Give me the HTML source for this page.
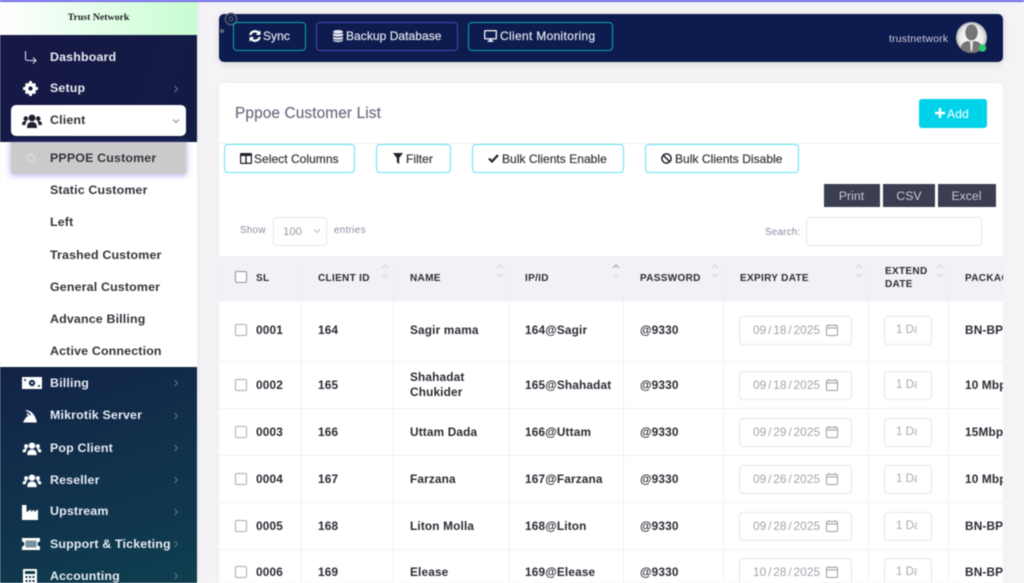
<!DOCTYPE html>
<html><head><meta charset="utf-8"><style>
html,body{margin:0;padding:0;width:1024px;height:583px;overflow:hidden;background:#f4f4f6}
#p{position:absolute;left:0;top:0;width:1024px;height:583px;overflow:hidden;font-family:"Liberation Sans",sans-serif;filter:blur(.45px)}
#p div,#p span,#p svg{position:absolute;white-space:nowrap}
.bar{left:0;top:0;width:1024px;height:2px;background:#6f66ea;z-index:9}
.m{left:50px;height:20px;line-height:20px;font-size:12.4px;font-weight:bold;letter-spacing:.17px;color:#e9ebf2}
.s{color:#33343c}
.ar{left:172px;width:8px;height:8px}
.ic{left:22px;width:18px;height:18px;fill:#fff}
.tb{top:22px;height:27px;border:1px solid #12a5b5;border-radius:4px;box-sizing:content-box}
.tt{top:23px;line-height:27px;font-size:12px;color:#e2e6f0;-webkit-text-stroke:.2px #e2e6f0}
.btn{top:144px;height:27px;border:1px solid #62e2f2;border-radius:4px;background:#fff}
.bt{top:145.500px;line-height:27px;font-size:12px;letter-spacing:.04px;color:#33343c;-webkit-text-stroke:.2px #33343c}
.dk{top:184px;height:23px;line-height:24px;background:#3a3e50;color:#c9cbd3;font-size:12.200px;text-align:center;letter-spacing:.05px}
.th{top:268.500px;height:20px;line-height:20px;font-size:10px;font-weight:bold;letter-spacing:.32px;color:#2b2c36}
.vl{top:257px;width:1px;height:326px;background:#efeff5}
.hl{left:219px;width:784px;height:1px;background:#efeff5}
.r{left:0;width:1024px;height:20px;line-height:20px;font-size:11.800px;font-weight:bold;letter-spacing:.17px;color:#2a2a33}
.r span{top:0}
.cb{left:235px;top:4px;width:9.500px;height:9.500px;border:1px solid #a9a9b6;border-radius:2px;background:#fff}
.d{left:739px;top:-4px;width:111px;height:27px;border:1px solid #e6e6ee;border-radius:4px;background:#fff}
.e{left:884px;top:-4px;width:46px;height:27px;border:1px solid #e6e6ee;border-radius:4px;background:#fff}
.r .dt{left:753px;font-weight:normal;color:#a3a3ad;letter-spacing:.1px;word-spacing:-1.600px;font-size:11.800px}
.r .et{left:896px;font-weight:normal;color:#a9a9b2;font-size:11.500px;letter-spacing:0;width:21px;overflow:hidden}
.cal{left:826px;top:4px;width:12px;height:12px}
.srt{width:8px;height:16px;top:264px}
.sm{line-height:16px;font-size:9.800px;color:#8b8ba0;letter-spacing:.35px}
</style></head><body><div id="p">
<div class="bar"></div>

<!-- sidebar -->
<div style="left:0;top:0;width:197px;height:583px;background:#fff;box-shadow:1px 0 6px rgba(0,0,0,.05)"></div>
<div style="left:0;top:2px;width:197px;height:33px;background:linear-gradient(90deg,#fff,#c8fdd2)"></div>
<div style="left:0;top:10.500px;width:197px;text-align:center;font-family:'Liberation Serif',serif;font-size:9.800px;font-weight:bold;color:#222;line-height:14px">Trust Network</div>
<div style="left:0;top:35px;width:197px;height:107px;background:linear-gradient(110deg,#171845,#131c45)"></div>
<div style="left:0;top:367px;width:197px;height:216px;background:linear-gradient(160deg,#122347,#0f3f50)"></div>

<svg style="left:24px;top:50px;width:14px;height:14px" viewBox="0 0 14 14" fill="none" stroke="#d8dbe6" stroke-width="1.100"><path d="M1.500 1v7.500a2 2 0 0 0 2 2H12M9 7.500l3 3-3 3"/></svg>
<div class="m" style="top:47px">Dashboard</div>

<svg class="ic" style="top:81px;left:23px;width:15px;height:15px" viewBox="0 0 16 16"><circle cx="8" cy="8" r="4.200" fill="none" stroke="#fff" stroke-width="3.800"/><path d="M6.600 0h2.800l.3 2.600H6.300zM6.600 16h2.800l.3-2.600H6.300zM0 6.600v2.800l2.600.3V6.300zM16 6.600v2.800l-2.600.3V6.300zM1.900 3.800l2-2 1.600 2-1.600 1.600zM14.100 3.800l-2-2-1.600 2 1.600 1.600zM1.900 12.200l2 2 1.600-2-1.600-1.600zM14.100 12.200l-2 2-1.600-2 1.600-1.600z"/></svg>
<div class="m" style="top:78px">Setup</div>
<svg class="ar" style="top:85px" viewBox="0 0 8 8" fill="none" stroke="#6d7288" stroke-width="1"><path d="M2.500 1l3 3-3 3"/></svg>

<div style="left:11px;top:105px;width:175px;height:31px;background:#fff;border-radius:5px"></div>
<svg style="left:22px;top:113px;width:20px;height:16px" viewBox="0 0 20 16" fill="#20202c"><circle cx="10" cy="5" r="3.400"/><circle cx="3.800" cy="5.600" r="2.300"/><circle cx="16.200" cy="5.600" r="2.300"/><path d="M5 15c0-4.500 1.800-6 5-6s5 1.500 5 6zM0 12c0-3 1-4 3.500-4 .5 0 1 .1 1.300.3C3.800 9.300 3.500 10.500 3.500 12zM20 12c0-3-1-4-3.500-4-.5 0-1 .1-1.300.3 1 1 1.300 2.200 1.300 3.700z"/></svg>
<div class="m s" style="top:110px;color:#2f3038">Client</div>
<svg class="ar" style="top:117px" viewBox="0 0 8 8" fill="none" stroke="#8b8c98" stroke-width="1"><path d="M1 2.500l3 3 3-3"/></svg>

<div style="left:11px;top:142px;width:175px;height:32px;background:#cbcbcb;border-radius:0 0 3px 3px;box-shadow:0 1px 6px 1px rgba(110,100,240,.45)"></div>
<div style="left:27px;top:154px;width:6px;height:6px;border:1px solid #e2e2e2;border-radius:50%"></div>
<div class="m s" style="top:148px">PPPOE Customer</div>
<div class="m s" style="top:180px">Static Customer</div>
<div class="m s" style="top:212px">Left</div>
<div class="m s" style="top:245px">Trashed Customer</div>
<div class="m s" style="top:277px">General Customer</div>
<div class="m s" style="top:309px">Advance Billing</div>
<div class="m s" style="top:341px">Active Connection</div>

<svg style="left:22px;top:377px;width:20px;height:13px" viewBox="0 0 20 13"><rect width="20" height="12" fill="#fff"/><circle cx="10" cy="6" r="3.200" fill="#16304c"/><circle cx="10" cy="6" r="1" fill="#fff"/><circle cx="3" cy="3" r="1" fill="#16304c"/><circle cx="17" cy="9" r="1" fill="#16304c"/></svg>
<div class="m" style="top:373px">Billing</div>
<svg style="left:23px;top:409px;width:15px;height:14px" viewBox="0 0 15 14" fill="#fff"><path d="M3 1c5 .5 9 4 11 12.500H0L2.500 9 5 7 3.500 4.500l1-.5L7 6.500 8 6C7 4 5 2.500 3 2z"/></svg>
<div class="m" style="top:405px">Mikrotik Server</div>
<svg style="left:22px;top:441px;width:20px;height:15px" viewBox="0 0 20 16" fill="#fff"><circle cx="10" cy="5" r="3.400"/><circle cx="3.800" cy="5.600" r="2.300"/><circle cx="16.200" cy="5.600" r="2.300"/><path d="M5 15c0-4.500 1.800-6 5-6s5 1.500 5 6zM0 12c0-3 1-4 3.500-4 .5 0 1 .1 1.300.3C3.800 9.300 3.500 10.500 3.500 12zM20 12c0-3-1-4-3.500-4-.5 0-1 .1-1.300.3 1 1 1.300 2.200 1.300 3.700z"/></svg>
<div class="m" style="top:438px">Pop Client</div>
<svg style="left:22px;top:473px;width:20px;height:15px" viewBox="0 0 20 16" fill="#fff"><circle cx="10" cy="5" r="3.400"/><circle cx="3.800" cy="5.600" r="2.300"/><circle cx="16.200" cy="5.600" r="2.300"/><path d="M5 15c0-4.500 1.800-6 5-6s5 1.500 5 6zM0 12c0-3 1-4 3.500-4 .5 0 1 .1 1.300.3C3.800 9.300 3.500 10.500 3.500 12zM20 12c0-3-1-4-3.500-4-.5 0-1 .1-1.300.3 1 1 1.300 2.200 1.300 3.700z"/></svg>
<div class="m" style="top:470px">Reseller</div>
<svg style="left:22px;top:505px;width:16px;height:15px" viewBox="0 0 16 15" fill="#fff"><path d="M0 0h4.500v7L9 4.500V7l3-2.500V7l4-2.500V15H0z"/></svg>
<div class="m" style="top:501px">Upstream</div>
<svg style="left:22px;top:538px;width:18px;height:12px" viewBox="0 0 18 12"><path fill="#fff" fill-rule="evenodd" d="M0 0h18v3.500a2.500 2.500 0 0 0 0 5V12H0V8.500a2.500 2.500 0 0 0 0-5zM3.500 2.500v7h11v-7z"/><rect x="3.500" y="2.500" width="11" height="7" fill="#fff" fill-opacity=".45"/></svg>
<div class="m" style="top:534px">Support &amp; Ticketing</div>
<svg style="left:23px;top:569px;width:14px;height:16px" viewBox="0 0 14 16"><path fill="#fff" fill-rule="evenodd" d="M1 0h12a1 1 0 0 1 1 1v15H0V1a1 1 0 0 1 1-1zM2 2v3h10V2zM2.500 7v2h2V7zM6 7v2h2V7zM9.500 7v2h2V7zM2.500 11v2h2v-2zM6 11v2h2v-2zM9.500 11v2h2v-2z"/></svg>
<div class="m" style="top:566px">Accounting</div>

<svg class="ar" style="top:379px" viewBox="0 0 8 8" fill="none" stroke="#5e7486" stroke-width="1"><path d="M2.500 1l3 3-3 3"/></svg>
<svg class="ar" style="top:412px" viewBox="0 0 8 8" fill="none" stroke="#5e7486" stroke-width="1"><path d="M2.500 1l3 3-3 3"/></svg>
<svg class="ar" style="top:444px" viewBox="0 0 8 8" fill="none" stroke="#5e7486" stroke-width="1"><path d="M2.500 1l3 3-3 3"/></svg>
<svg class="ar" style="top:476px" viewBox="0 0 8 8" fill="none" stroke="#5e7486" stroke-width="1"><path d="M2.500 1l3 3-3 3"/></svg>
<svg class="ar" style="top:508px" viewBox="0 0 8 8" fill="none" stroke="#5e7486" stroke-width="1"><path d="M2.500 1l3 3-3 3"/></svg>
<svg class="ar" style="top:540px;left:172px" viewBox="0 0 8 8" fill="none" stroke="#5e7486" stroke-width="1"><path d="M2.500 1l3 3-3 3"/></svg>
<svg class="ar" style="top:572px" viewBox="0 0 8 8" fill="none" stroke="#5e7486" stroke-width="1"><path d="M2.500 1l3 3-3 3"/></svg>

<!-- navbar -->
<div style="left:218.500px;top:13.500px;width:784px;height:48px;background:#0e1b4e;border-radius:5px;box-shadow:0 2px 8px rgba(0,0,0,.12)"></div>
<svg style="left:224px;top:12px;width:14px;height:14px" viewBox="0 0 14 14" fill="none" stroke="#5d6478"><circle cx="7" cy="7" r="5.700" stroke-width="1.300"/><circle cx="7" cy="7" r="2" stroke-width="1"/></svg>
<div style="left:220px;top:29px;width:3.500px;height:3.500px;background:#5d6478;border-radius:50%"></div>
<div class="tb" style="left:233px;width:71px"></div>
<div class="tb" style="left:316px;width:140px;border-color:#4b45b5"></div>
<div class="tb" style="left:468px;width:143px"></div>
<svg style="left:249px;top:30px;width:12px;height:12px" viewBox="0 0 12 12" fill="none" stroke="#fff" stroke-width="2.300"><path d="M1.300 5A4.800 4.800 0 0 1 10 3.500M10.700 7A4.800 4.800 0 0 1 2 8.500"/><path d="M11.500 .2v4.800H6.800zM.5 11.800V7h4.700z" fill="#fff" stroke="none"/></svg>
<div class="tt" style="left:263px;letter-spacing:.05px">Sync</div>
<svg style="left:333px;top:30px;width:10px;height:12px" viewBox="0 0 10 12" fill="#e6e8f0"><ellipse cx="5" cy="1.800" rx="5" ry="1.800"/><path d="M0 3.200c1 1 9 1 10 0V5.600c-1 1.300-9 1.300-10 0zM0 6.800c1 1 9 1 10 0v2c-1 1.300-9 1.300-10 0zM0 9.800c1 1 9 1 10 0v.7C9.500 12.500.5 12.500 0 10.500z"/></svg>
<div class="tt" style="left:346px;letter-spacing:.05px">Backup Database</div>
<svg style="left:484px;top:30px;width:13px;height:12px" viewBox="0 0 13 12"><path fill="#e6e8f0" fill-rule="evenodd" d="M1 0h11a1 1 0 0 1 1 1v7.500a1 1 0 0 1-1 1H8v1.200h1.500V12h-6v-1.300H5V9.500H1a1 1 0 0 1-1-1V1a1 1 0 0 1 1-1zm.4 1.400v6.700h10.200V1.400z"/></svg>
<div class="tt" style="left:500px;letter-spacing:.32px">Client Monitoring</div>
<div style="left:889px;top:32px;line-height:15px;font-size:10.400px;color:#cdd0dc;letter-spacing:.22px">trustnetwork</div>
<svg style="left:956px;top:22px;width:32px;height:32px" viewBox="0 0 32 32">
<defs><radialGradient id="a"><stop offset="0" stop-color="#fff"/><stop offset=".75" stop-color="#ececec"/><stop offset="1" stop-color="#b5b5b5"/></radialGradient><clipPath id="c"><circle cx="15.500" cy="15.500" r="15.500"/></clipPath></defs>
<circle cx="15.500" cy="15.500" r="15.500" fill="url(#a)"/>
<g clip-path="url(#c)"><ellipse cx="15.500" cy="10.500" rx="6.200" ry="8" fill="#757575"/><path d="M4 31c0-8 3-11 8-12l3.500 1 3.500-1c5 1 8 4 8 12z" fill="#757575"/><path d="M14 20h3l-.7 9h-1.600z" fill="#e8e8e8"/></g>
<circle cx="26.500" cy="26" r="3.800" fill="#2dcb6b"/></svg>

<!-- card -->
<div style="left:219px;top:83px;width:784px;height:500px;background:#fff;border-radius:5px 5px 0 0;box-shadow:0 0 8px rgba(0,0,0,.04)"></div>
<div style="left:235px;top:103.500px;line-height:20px;font-size:15.400px;color:#6b6b80;letter-spacing:.12px;-webkit-text-stroke:.15px #6b6b80">Pppoe Customer List</div>
<div style="left:918.500px;top:98.500px;width:68px;height:29px;background:#00d2ea;border-radius:3px"></div>
<svg style="left:935px;top:108px;width:10px;height:10px" viewBox="0 0 10 10" fill="#fff"><path d="M3.800 0h2.400v3.800H10v2.400H6.200V10H3.800V6.200H0V3.800h3.800z"/></svg>
<div style="left:947px;top:103.500px;line-height:20px;font-size:12px;color:#e4fbff;letter-spacing:.25px;-webkit-text-stroke:.2px #e4fbff">Add</div>
<div style="left:219px;top:143px;width:784px;height:1px;background:#f0f0f4"></div>

<div class="btn" style="left:224px;width:129px"></div>
<svg style="left:240px;top:153px;width:12px;height:11px" viewBox="0 0 12 11"><path fill="#22232c" fill-rule="evenodd" d="M1 0h10a1 1 0 0 1 1 1v9a1 1 0 0 1-1 1H1a1 1 0 0 1-1-1V1a1 1 0 0 1 1-1zm.3 3v6.700h4V3zm5.400 0v6.700h4V3z"/></svg>
<div class="bt" style="left:254px">Select Columns</div>
<div class="btn" style="left:376px;width:73px"></div>
<svg style="left:393px;top:153px;width:10px;height:11px" viewBox="0 0 10 11" fill="#22232c"><path d="M0 0h10L6.200 5v6L3.800 9.300V5z"/></svg>
<div class="bt" style="left:406px">Filter</div>
<div class="btn" style="left:472px;width:150px"></div>
<svg style="left:488px;top:154px;width:11px;height:9px" viewBox="0 0 11 9" fill="none" stroke="#22232c" stroke-width="2.200"><path d="M1 4.500l3 3 6-6.500"/></svg>
<div class="bt" style="left:502px">Bulk Clients Enable</div>
<div class="btn" style="left:645px;width:152px"></div>
<svg style="left:661px;top:153px;width:11px;height:11px" viewBox="0 0 11 11" fill="none" stroke="#22232c" stroke-width="1.500"><circle cx="5.500" cy="5.500" r="4.600"/><path d="M2.300 2.300l6.400 6.400"/></svg>
<div class="bt" style="left:675px">Bulk Clients Disable</div>

<div class="dk" style="left:823.500px;width:56px">Print</div>
<div class="dk" style="left:883px;width:52px">CSV</div>
<div class="dk" style="left:937.500px;width:58px">Excel</div>

<div class="sm" style="left:240px;top:223px">Show</div>
<div style="left:273px;top:217px;width:52px;height:27px;border:1px solid #e6e6ee;border-radius:4px"></div>
<div style="left:283px;top:224px;line-height:16px;font-size:11.400px;color:#9a9aa5">100</div>
<svg style="left:313px;top:228px;width:8px;height:6px" viewBox="0 0 8 6" fill="none" stroke="#b5b5c0" stroke-width=".9"><path d="M1 1.500l3 3 3-3"/></svg>
<div class="sm" style="left:334px;top:223px">entries</div>
<div class="sm" style="left:765px;top:225px;letter-spacing:.25px">Search:</div>
<div style="left:806px;top:217px;width:174px;height:27px;border:1px solid #e6e6ee;border-radius:4px"></div>

<!-- table -->
<div style="left:219px;top:256px;width:784px;height:43px;background:#f1f1f6"></div>
<div class="vl" style="left:301px"></div><div class="vl" style="left:393px"></div><div class="vl" style="left:509px"></div><div class="vl" style="left:623px"></div><div class="vl" style="left:723px"></div><div class="vl" style="left:868px"></div><div class="vl" style="left:948px"></div>
<div class="hl" style="top:299px;height:2px"></div><div class="hl" style="top:361px"></div><div class="hl" style="top:408px"></div><div class="hl" style="top:455px"></div><div class="hl" style="top:502px"></div><div class="hl" style="top:549px"></div>

<div style="left:235px;top:271px;width:9.500px;height:9.500px;border:1px solid #8f8f9e;border-radius:2px;background:#fff"></div>
<div class="th" style="left:256px">SL</div>
<div class="th" style="left:318px">CLIENT ID</div>
<div class="th" style="left:410px">NAME</div>
<div class="th" style="left:525px">IP/ID</div>
<div class="th" style="left:640px">PASSWORD</div>
<div class="th" style="left:740px">EXPIRY DATE</div>
<div class="th" style="left:885px;top:264.500px;line-height:13px;height:26px">EXTEND<br>DATE</div>
<div class="th" style="left:965px">PACKAGE</div>

<svg class="srt" style="left:381px" viewBox="0 0 8 16" fill="none" stroke="#d4d4de"><path d="M1 4l3-3 3 3M1 10l3 3 3-3"/></svg>
<svg class="srt" style="left:496px" viewBox="0 0 8 16" fill="none" stroke="#d4d4de"><path d="M1 4l3-3 3 3M1 10l3 3 3-3"/></svg>
<svg class="srt" style="left:612px" viewBox="0 0 8 16" fill="none"><path d="M1 4l3-3 3 3" stroke="#9a9aa8"/><path d="M1 10l3 3 3-3" stroke="#d4d4de"/></svg>
<svg class="srt" style="left:711px" viewBox="0 0 8 16" fill="none" stroke="#d4d4de"><path d="M1 4l3-3 3 3M1 10l3 3 3-3"/></svg>
<svg class="srt" style="left:855px" viewBox="0 0 8 16" fill="none" stroke="#d4d4de"><path d="M1 4l3-3 3 3M1 10l3 3 3-3"/></svg>
<svg class="srt" style="left:936px" viewBox="0 0 8 16" fill="none" stroke="#d4d4de"><path d="M1 4l3-3 3 3M1 10l3 3 3-3"/></svg>

<div class="r" style="top:320px"><div class="cb"></div><span style="left:256px">0001</span><span style="left:318px">164</span><span style="left:410px">Sagir mama</span><span style="left:525px">164@Sagir</span><span style="left:640px">@9330</span><div class="d"></div><span class="dt">09 / 18 / 2025</span><svg class="cal" viewBox="0 0 12 12" fill="none" stroke="#9b9ba5"><rect x=".5" y="1.500" width="11" height="10" rx="1"/><path d="M.5 4h11M3 0v2M9 0v2"/></svg><div class="e"></div><span class="et">1 Day</span><span style="left:965px">BN-BP</span></div>
<div class="r" style="top:375px"><div class="cb"></div><span style="left:256px">0002</span><span style="left:318px">165</span><span style="left:410px;line-height:15px;height:30px;top:-5px">Shahadat<br>Chukider</span><span style="left:525px">165@Shahadat</span><span style="left:640px">@9330</span><div class="d"></div><span class="dt">09 / 18 / 2025</span><svg class="cal" viewBox="0 0 12 12" fill="none" stroke="#9b9ba5"><rect x=".5" y="1.500" width="11" height="10" rx="1"/><path d="M.5 4h11M3 0v2M9 0v2"/></svg><div class="e"></div><span class="et">1 Day</span><span style="left:965px">10 Mbps</span></div>
<div class="r" style="top:422px"><div class="cb"></div><span style="left:256px">0003</span><span style="left:318px">166</span><span style="left:410px">Uttam Dada</span><span style="left:525px">166@Uttam</span><span style="left:640px">@9330</span><div class="d"></div><span class="dt">09 / 29 / 2025</span><svg class="cal" viewBox="0 0 12 12" fill="none" stroke="#9b9ba5"><rect x=".5" y="1.500" width="11" height="10" rx="1"/><path d="M.5 4h11M3 0v2M9 0v2"/></svg><div class="e"></div><span class="et">1 Day</span><span style="left:965px">15Mbps</span></div>
<div class="r" style="top:469px"><div class="cb"></div><span style="left:256px">0004</span><span style="left:318px">167</span><span style="left:410px">Farzana</span><span style="left:525px">167@Farzana</span><span style="left:640px">@9330</span><div class="d"></div><span class="dt">09 / 26 / 2025</span><svg class="cal" viewBox="0 0 12 12" fill="none" stroke="#9b9ba5"><rect x=".5" y="1.500" width="11" height="10" rx="1"/><path d="M.5 4h11M3 0v2M9 0v2"/></svg><div class="e"></div><span class="et">1 Day</span><span style="left:965px">10 Mbps</span></div>
<div class="r" style="top:516px"><div class="cb"></div><span style="left:256px">0005</span><span style="left:318px">168</span><span style="left:410px">Liton Molla</span><span style="left:525px">168@Liton</span><span style="left:640px">@9330</span><div class="d"></div><span class="dt">09 / 28 / 2025</span><svg class="cal" viewBox="0 0 12 12" fill="none" stroke="#9b9ba5"><rect x=".5" y="1.500" width="11" height="10" rx="1"/><path d="M.5 4h11M3 0v2M9 0v2"/></svg><div class="e"></div><span class="et">1 Day</span><span style="left:965px">BN-BP</span></div>
<div class="r" style="top:562px"><div class="cb"></div><span style="left:256px">0006</span><span style="left:318px">169</span><span style="left:410px">Elease</span><span style="left:525px">169@Elease</span><span style="left:640px">@9330</span><div class="d"></div><span class="dt">10 / 28 / 2025</span><svg class="cal" viewBox="0 0 12 12" fill="none" stroke="#9b9ba5"><rect x=".5" y="1.500" width="11" height="10" rx="1"/><path d="M.5 4h11M3 0v2M9 0v2"/></svg><div class="e"></div><span class="et">1 Day</span><span style="left:965px">BN-BP</span></div>

<div style="left:1003px;top:62px;width:21px;height:521px;background:#f4f4f6;z-index:5"></div>
</div></body></html>
